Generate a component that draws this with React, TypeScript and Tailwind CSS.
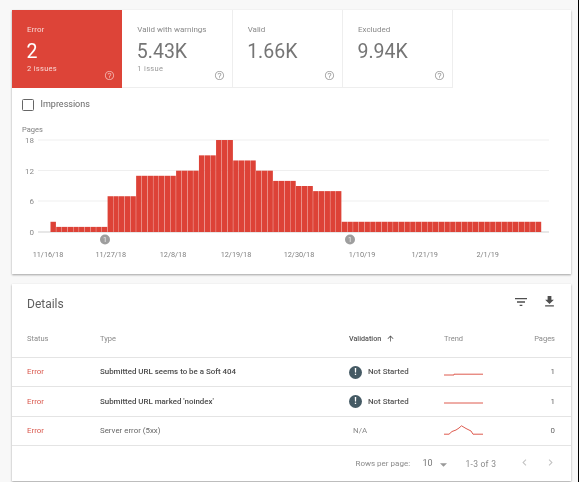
import React from "react";

const HELP = "M11 18h2v-2h-2v2zm1-16C6.48 2 2 6.48 2 12s4.48 10 10 10 10-4.48 10-10S17.52 2 12 2zm0 18c-4.41 0-8-3.59-8-8s3.59-8 8-8 8 3.59 8 8-3.59 8-8 8zm0-14c-2.21 0-4 1.79-4 4h2c0-1.1.9-2 2-2s2 .9 2 2c0 2-3 1.75-3 5h2c0-2.25 3-2.5 3-5 0-2.21-1.79-4-4-4z";

function Icon({ d, className }: { d: string; className: string }) {
  return (
    <svg viewBox="0 0 24 24" className={className} fill="currentColor">
      <path d={d} />
    </svg>
  );
}

function Tile({ label, value, sub, active }: { label: string; value: string; sub?: string; active?: boolean }) {
  return (
    <div
      className={
        "relative w-[110.33px] h-[78px] pl-[15px] pt-[14px] " +
        (active ? "bg-[#dd4438] text-white" : "bg-white text-[#757575] border-r border-b border-[#eeeeee]")
      }
    >
      <div className={"text-[8px] leading-[11px] " + (active ? "text-[#f8d5d2]" : "text-[#8a8a8a]")}>{label}</div>
      <div className="text-[19.5px] leading-[23px] mt-[5px] -ml-[0.5px]">{value}</div>
      {sub && <div className={"text-[7.5px] leading-[10px] tracking-[0.3px] mt-[1px] " + (active ? "text-[#f8d5d2]" : "text-[#9a9a9a]")}>{sub}</div>}
      <Icon d={HELP} className={"absolute left-[91.5px] top-[59.5px] w-[11px] h-[11px] " + (active ? "text-[#f0a9a3]" : "text-[#a8a8a8]")} />
    </div>
  );
}

const runs: [number, number][] = [
  [2, 1], [1, 9], [7, 5], [11, 7], [12, 4], [15, 3], [18, 3], [14, 4], [12, 3], [10, 4], [9, 3], [8, 5], [2, 35],
];
const bars: number[] = runs.flatMap(([v, n]) => Array(n).fill(v));
const xLabels: [string, number][] = [
  ["11/16/18", 48], ["11/27/18", 110.7], ["12/8/18", 173], ["12/19/18", 236],
  ["12/30/18", 299], ["1/10/19", 362], ["1/21/19", 424.7], ["2/1/19", 487.7],
];

function Chart() {
  const step = 491 / 86;
  return (
    <svg viewBox="12 121 559 153" className="block w-[559px] h-[153px]" style={{ fontFamily: "Roboto, sans-serif" }}>
      <text x={22} y={132} fontSize={7.5} fill="#808080">Pages</text>
      {[[18, 140], [12, 170.5], [6, 201], [0, 232]].map(([v, y]) => (
        <g key={v}>
          <line x1={38} x2={549} y1={y} y2={y} stroke={v === 0 ? "#cfcfcf" : "#efefef"} strokeWidth={1} />
          <text x={34} y={y + 3} fontSize={8} textAnchor="end" fill="#8a8a8a">{v}</text>
        </g>
      ))}
      {bars.map((v, i) => (
        <rect key={i} x={50.5 + i * step} y={232 - v * 5.11} width={step - 0.3} height={v * 5.11} fill="#dd4237" />
      ))}
      {[105, 350].map((x) => (
        <g key={x}>
          <circle cx={x} cy={239.5} r={5} fill="#9e9e9e" />
          <text x={x} y={242} fontSize={7} textAnchor="middle" fill="#eeeeee">1</text>
        </g>
      ))}
      {xLabels.map(([t, x]) => (
        <text key={t} x={x} y={257} fontSize={7.3} textAnchor="middle" fill="#808080">{t}</text>
      ))}
    </svg>
  );
}

function Trend({ points }: { points: string }) {
  return (
    <svg viewBox="0 0 40 12" className="block w-[40px] h-[12px]">
      <polyline points={points} fill="none" stroke="#de5b4f" strokeWidth={1} />
    </svg>
  );
}

function Alert() {
  return (
    <span className="relative flex w-[13px] h-[13px] rounded-full bg-[#455a64] items-center justify-center text-white text-[9px] font-bold leading-none">!</span>
  );
}

const GRID = "grid grid-cols-[73px_249px_95px_1fr_70px] items-center pl-[15px] pr-[16px]";

function Row({ name, bold, validation, trend, pages }: { name: string; bold?: boolean; validation?: boolean; trend: string; pages: string }) {
  return (
    <div className={GRID + " h-[29.3px] border-b border-[#e4e4e4] text-[7.9px]"}>
      <div className="text-[#d9564b]">Error</div>
      <div className={bold ? "font-medium text-[#4a4a4a]" : "text-[#666666]"}>{name}</div>
      {validation ? (
        <div className="flex items-center gap-[6px] font-medium text-[#555555]">
          <Alert />
          <span>Not Started</span>
        </div>
      ) : (
        <div className="pl-[4px] text-[#8a8a8a]">N/A</div>
      )}
      <Trend points={trend} />
      <div className="text-right text-[#666666]">{pages}</div>
    </div>
  );
}

export default function App() {
  return (
    <div className="w-[579px] h-[482px] overflow-hidden bg-[#f8f8f8] pt-[10px] pl-[12px] border-r border-black blur-[0.4px]" style={{ fontFamily: "Roboto, sans-serif" }}>
      <div className="w-[559px] h-[264px] bg-white shadow-[0_1px_2px_rgba(0,0,0,0.35)]">
        <div className="flex">
          <Tile active label="Error" value="2" sub="2 issues" />
          <Tile label="Valid with warnings" value="5.43K" sub="1 issue" />
          <Tile label="Valid" value="1.66K" />
          <Tile label="Excluded" value="9.94K" />
        </div>
        <div className="h-[33px] pl-[10px] flex items-center gap-[6.5px]">
          <span className="w-[12px] h-[12px] rounded-[1.5px] border border-[#666666]" />
          <span className="text-[9px] text-[#666666]">Impressions</span>
        </div>
        <Chart />
      </div>

      <div className="w-[559px] h-[197px] mt-[10px] bg-white shadow-[0_1px_2px_rgba(0,0,0,0.35)]">
        <div className="h-[37px] flex items-center justify-between pl-[15px] pr-[14px] pt-[2px]">
          <span className="text-[12px] text-[#5f5f5f]">Details</span>
          <div className="flex items-center gap-[13.5px] text-[#4f4f4f] mb-[4px]">
            <Icon d="M10 18h4v-2h-4v2zM3 6v2h18V6H3zm3 7h12v-2H6v2z" className="w-[16px] h-[16px]" />
            <Icon d="M19 9h-4V3H9v6H5l7 7 7-7zM5 18v2h14v-2H5z" className="w-[15px] h-[15px]" />
          </div>
        </div>
        <div className={GRID + " h-[37px] border-b border-[#e4e4e4] text-[7.5px] text-[#8a8a8a]"}>
          <div>Status</div>
          <div>Type</div>
          <div className="flex items-center gap-[5px] font-medium text-[#555555] text-[7.2px]">
            Validation
            <Icon d="M4 12l1.41 1.41L11 7.83V20h2V7.83l5.58 5.59L20 12l-8-8-8 8z" className="w-[9px] h-[9px]" />
          </div>
          <div>Trend</div>
          <div className="text-right">Pages</div>
        </div>
        <Row bold name="Submitted URL seems to be a Soft 404" validation trend="0,9 10,9 10,8.2 39,8.2" pages="1" />
        <Row bold name="Submitted URL marked 'noindex'" validation trend="0,8 39,8" pages="1" />
        <Row name="Server error (5xx)" trend="0,9.2 5,9.2 8,6.5 12,5 15,3 17.5,0.8 22,3.5 27,6 29,9.2 39,9.2" pages="0" />
        <div className="h-[36px] flex items-center text-[8px] text-[#8a8a8a] pl-[343.5px]">
          <span className="w-[63px]">Rows per page:</span>
          <span className="text-[9px] text-[#777777] w-[21.5px] pl-[4px]">10</span>
          <svg viewBox="0 0 8 4" className="w-[7px] h-[4px] mt-[2px]"><path d="M0 0h8L4 4z" fill="#999999" /></svg>
          <span className="ml-[18.5px] w-[52.5px] text-[8.5px] tracking-[0.25px] text-[#8a8a8a]">1-3 of 3</span>
          <Icon d="M15.41 7.41L14 6l-6 6 6 6 1.41-1.41L10.83 12z" className="w-[13px] h-[13px] text-[#c4c4c4] -mt-[3px]" />
          <Icon d="M10 6L8.59 7.41 13.17 12l-4.58 4.59L10 18l6-6z" className="w-[13px] h-[13px] text-[#c4c4c4] ml-[13px] -mt-[3px]" />
        </div>
      </div>
    </div>
  );
}
